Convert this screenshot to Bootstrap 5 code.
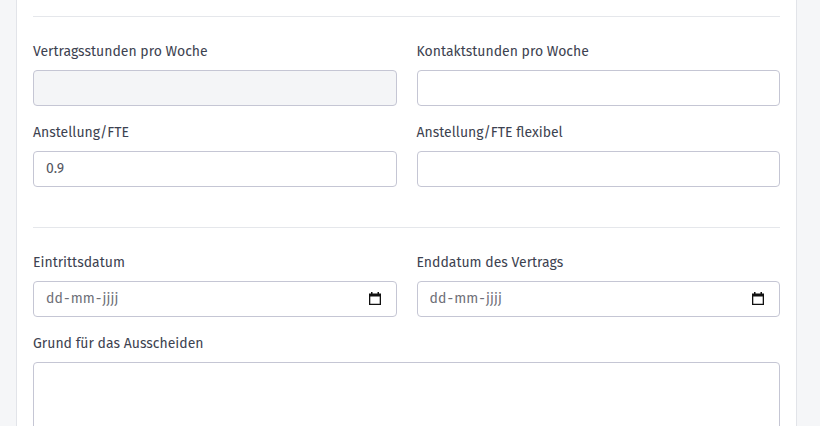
<!DOCTYPE html>
<html lang="de"><head><meta charset="utf-8">
<link href="https://cdn.jsdelivr.net/npm/bootstrap@5.3.0/dist/css/bootstrap.min.css" rel="stylesheet">
<style>
html,body{height:426px;overflow:hidden;background:#f5f6f8}
body{font-family:"Fira Sans","Noto Sans",sans-serif;font-size:14px;color:#374151}
.sheet{margin:-20px 23px 0 16px;background:#fff;border:1px solid #e2e4e9;border-top:0;padding:36px 16px 0;height:600px}
.sheet hr{margin:0;border-color:#e5e7eb;opacity:1}
.sheet .form-label{font-size:14px;margin-bottom:8px;margin-top:.8px;line-height:20px;display:block;color:#3d4250}
.sheet .form-control{height:36px;font-size:14px;border-color:#c5c6d4;color:#55565f;padding:6px 12px;border-radius:4px}
.sheet .form-control:disabled{background:#f4f5f7}
.sheet .form-control::placeholder{color:#6e6f78;opacity:1;letter-spacing:.1px}
.sheet textarea.form-control{height:120px}
.fr{--bs-gutter-x:20px;--bs-gutter-y:0}
.fld{margin-bottom:16px}
.fr2 .fld{margin-bottom:16.2px}
.divider{margin-top:24.2px!important}
.datebox{position:relative}
.calico{position:absolute;right:16px;top:11px;width:12px;height:13px;pointer-events:none}
</style></head><body>
<div class="sheet">
<hr class="mb-4">
<div class="row fr">
<div class="col-6 fld"><label class="form-label">Vertragsstunden pro Woche</label><input class="form-control" disabled></div>
<div class="col-6 fld"><label class="form-label">Kontaktstunden pro Woche</label><input class="form-control"></div>
<div class="col-6 fld"><label class="form-label">Anstellung/FTE</label><input class="form-control" value="0.9"></div>
<div class="col-6 fld"><label class="form-label">Anstellung/FTE flexibel</label><input class="form-control"></div>
</div>
<hr class="divider mb-4">
<div class="row fr fr2">
<div class="col-6 fld"><label class="form-label">Eintrittsdatum</label><div class="datebox"><input class="form-control" placeholder="dd&#8202;-&#8202;mm&#8202;-&#8202;jjjj"><svg class="calico" viewBox="0 0 12 13"><path fill="#111" d="M0 1.5h2V0h1.5v1.5h5V0H10v1.5h2V13H0zM1.3 4.5v7.2h9.4V4.5z"/></svg></div></div>
<div class="col-6 fld"><label class="form-label">Enddatum des Vertrags</label><div class="datebox"><input class="form-control" placeholder="dd&#8202;-&#8202;mm&#8202;-&#8202;jjjj"><svg class="calico" viewBox="0 0 12 13"><path fill="#111" d="M0 1.5h2V0h1.5v1.5h5V0H10v1.5h2V13H0zM1.3 4.5v7.2h9.4V4.5z"/></svg></div></div>
<div class="col-12 fld"><label class="form-label">Grund für das Ausscheiden</label><textarea class="form-control"></textarea></div>
</div>
</div>
<script src="https://cdn.jsdelivr.net/npm/bootstrap@5.3.0/dist/js/bootstrap.bundle.min.js"></script>
</body></html>
